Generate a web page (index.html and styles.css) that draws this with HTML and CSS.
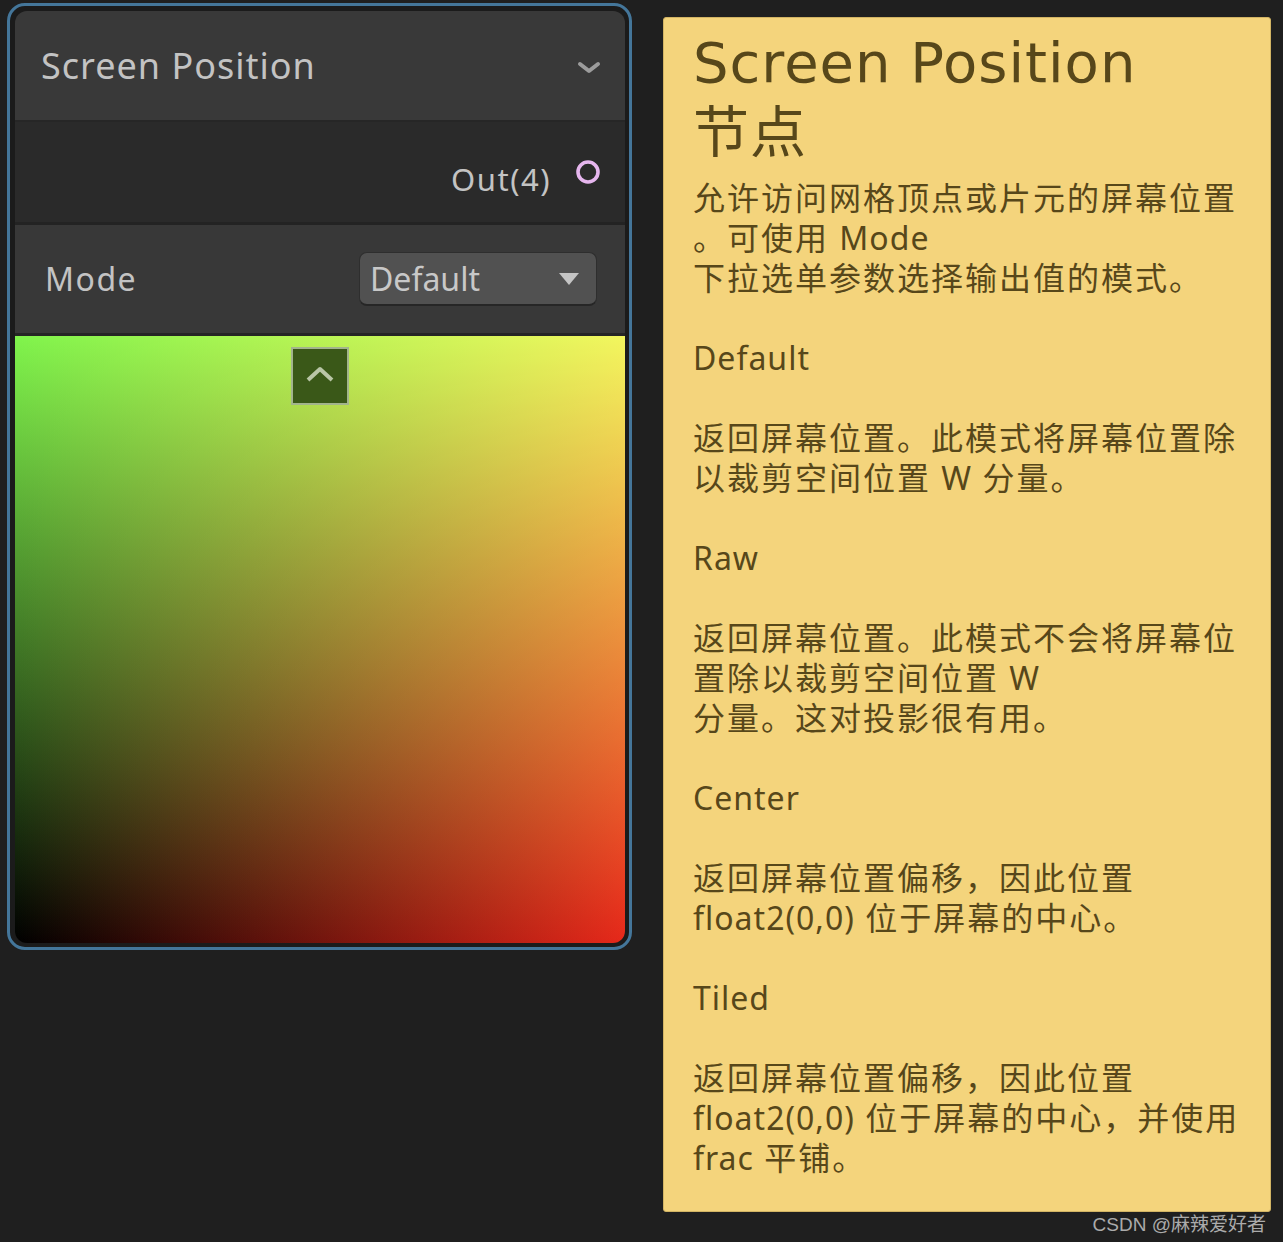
FILE: index.html
```html
<!DOCTYPE html>
<html lang="zh">
<head>
<meta charset="utf-8">
<title>Screen Position</title>
<link rel="stylesheet" href="styles.css">
</head>
<body>
<div class="canvas">
  <div class="node">
    <div class="node-inner">
      <div class="header">
        <span class="title">Screen Position</span>
        <svg class="chev" width="24" height="14" viewBox="0 0 24 14"><polyline points="3,3 12,10 21,3" fill="none" stroke="#9c9c9c" stroke-width="4" stroke-linejoin="round" stroke-linecap="round"/></svg>
      </div>
      <div class="ports">
        <span class="port-label">Out(4)</span>
        <svg class="port" width="26" height="26" viewBox="0 0 26 26"><circle cx="13" cy="13" r="10" fill="none" stroke="#e6b6ee" stroke-width="3.6"/></svg>
      </div>
      <div class="controls">
        <span class="ctl-label">Mode</span>
        <div class="dropdown">
          <span>Default</span>
          <svg width="22" height="14" viewBox="0 0 22 14"><polygon points="1,1 21,1 11,13" fill="#c4c4c4"/></svg>
        </div>
      </div>
      <div class="preview">
        <div class="collapse">
          <svg width="30" height="18" viewBox="0 0 30 18"><polyline points="3,15 15,4 27,15" fill="none" stroke="#b9c6a6" stroke-width="4" stroke-linejoin="round"/></svg>
        </div>
      </div>
    </div>
  </div>
  <div class="note">
    <h1 class="note-title"><span class="tline">Screen Position</span><span class="tline">节点</span></h1>
    <div class="note-body">
      <p>允许访问网格顶点或片元的屏幕位置<br>。可使用 <span class="lat">Mode</span><br>下拉选单参数选择输出值的模式。</p>
      <p><span class="lat">Default</span></p>
      <p>返回屏幕位置。此模式将屏幕位置除<br>以裁剪空间位置 <span class="lat">W</span> 分量。</p>
      <p><span class="lat">Raw</span></p>
      <p>返回屏幕位置。此模式不会将屏幕位<br>置除以裁剪空间位置 <span class="lat">W</span><br>分量。这对投影很有用。</p>
      <p><span class="lat">Center</span></p>
      <p>返回屏幕位置偏移，因此位置<br><span class="lat">float2(0,0)</span> 位于屏幕的中心。</p>
      <p><span class="lat">Tiled</span></p>
      <p>返回屏幕位置偏移，因此位置<br><span class="lat">float2(0,0)</span> 位于屏幕的中心，并使用<br><span class="lat">frac</span> 平铺。</p>
    </div>
  </div>
</div>
<div class="watermark">CSDN @麻辣爱好者</div>
</body>
</html>
```
FILE: styles.css
```css
html, body {
  margin: 0;
  padding: 0;
  background: #1f1f1f;
}
body {
  width: 1283px;
  height: 1242px;
  position: relative;
  overflow: hidden;
  font-family: "Noto Sans", "Noto Sans CJK SC", sans-serif;
}
.canvas {
  display: flex;
  align-items: flex-start;
  gap: 31px;
  padding: 3px 0 0 7px;
}
.node {
  box-sizing: border-box;
  width: 625px;
  height: 947px;
  border: 3px solid #44769a;
  border-radius: 18px;
  padding: 5px 4px 4px 5px;
  background: #1b1b1b;
  display: flex;
}
.node-inner {
  flex: 1;
  display: flex;
  flex-direction: column;
  border-radius: 12px;
  overflow: hidden;
  color: #c3c3c3;
}
.header {
  box-sizing: border-box;
  height: 111px;
  border-bottom: 2px solid #262626;
  background: #393939;
  display: flex;
  align-items: center;
  justify-content: space-between;
  padding: 0 24px 0 26px;
}
.title {
  font-size: 36px;
  letter-spacing: 1px;
  line-height: 1;
}
.chev { margin-top: 4px; }
.ports {
  box-sizing: border-box;
  height: 103px;
  border-bottom: 3px solid #232323;
  background: #2a2a2a;
  display: flex;
  align-items: center;
  justify-content: flex-end;
  gap: 24px;
  padding: 0 24px 0 0;
}
.port-label {
  font-size: 31px;
  letter-spacing: 1.5px;
  line-height: 1;
  margin-top: 14px;
}
.controls {
  box-sizing: border-box;
  height: 111px;
  border-bottom: 3px solid #252525;
  background: #383838;
  display: flex;
  align-items: center;
  justify-content: space-between;
  padding: 0 28px 0 30px;
}
.ctl-label {
  font-size: 32px;
  letter-spacing: 1.5px;
  line-height: 1;
}
.dropdown {
  box-sizing: border-box;
  width: 238px;
  height: 54px;
  background: #515151;
  border: 1px solid #2e2e2e;
  border-bottom: 2px solid #262626;
  border-radius: 8px;
  display: flex;
  align-items: center;
  justify-content: space-between;
  padding: 0 16px 0 10px;
  font-size: 32px;
  letter-spacing: 0;
  color: #c8c8c8;
}
.preview {
  flex: 1;
  display: flex;
  justify-content: center;
  align-items: flex-start;
  padding-top: 11px;
  background-image:
    linear-gradient(to right, #000000, #e6281a),
    linear-gradient(to bottom, #80f44c, #000000);
  background-blend-mode: screen;
}
.collapse {
  box-sizing: border-box;
  width: 58px;
  height: 58px;
  background: #3a5818;
  border: 2px solid #a2b48c;
  display: flex;
  align-items: center;
  justify-content: center;
}
.collapse svg { margin-top: -4px; }
.note {
  box-sizing: border-box;
  margin-top: 14px;
  width: 608px;
  height: 1195px;
  background: #f4d47c;
  border: 1px solid #d2b464;
  border-radius: 3px;
  padding: 10px 20px 0 29px;
  color: #57471a;
}
.note-title {
  margin: 0;
  font-weight: normal;
  font-family: "DejaVu Sans", "Noto Sans CJK SC", sans-serif;
  font-size: 56px;
  line-height: 70px;
  letter-spacing: 1px;
}
.tline {
  display: block;
  height: 70px;
}
.note-body {
  margin-top: 10px;
  font-size: 32px;
  line-height: 40px;
  letter-spacing: 2px;
  white-space: nowrap;
}
.note-body p {
  margin: 0 0 40px 0;
}
.lat {
  letter-spacing: 1px;
}
.watermark {
  position: absolute;
  right: 17px;
  top: 1209px;
  font-family: "Liberation Sans", "Noto Sans CJK SC", sans-serif;
  font-size: 19px;
  color: #ababab;
  letter-spacing: 0;
}
```
